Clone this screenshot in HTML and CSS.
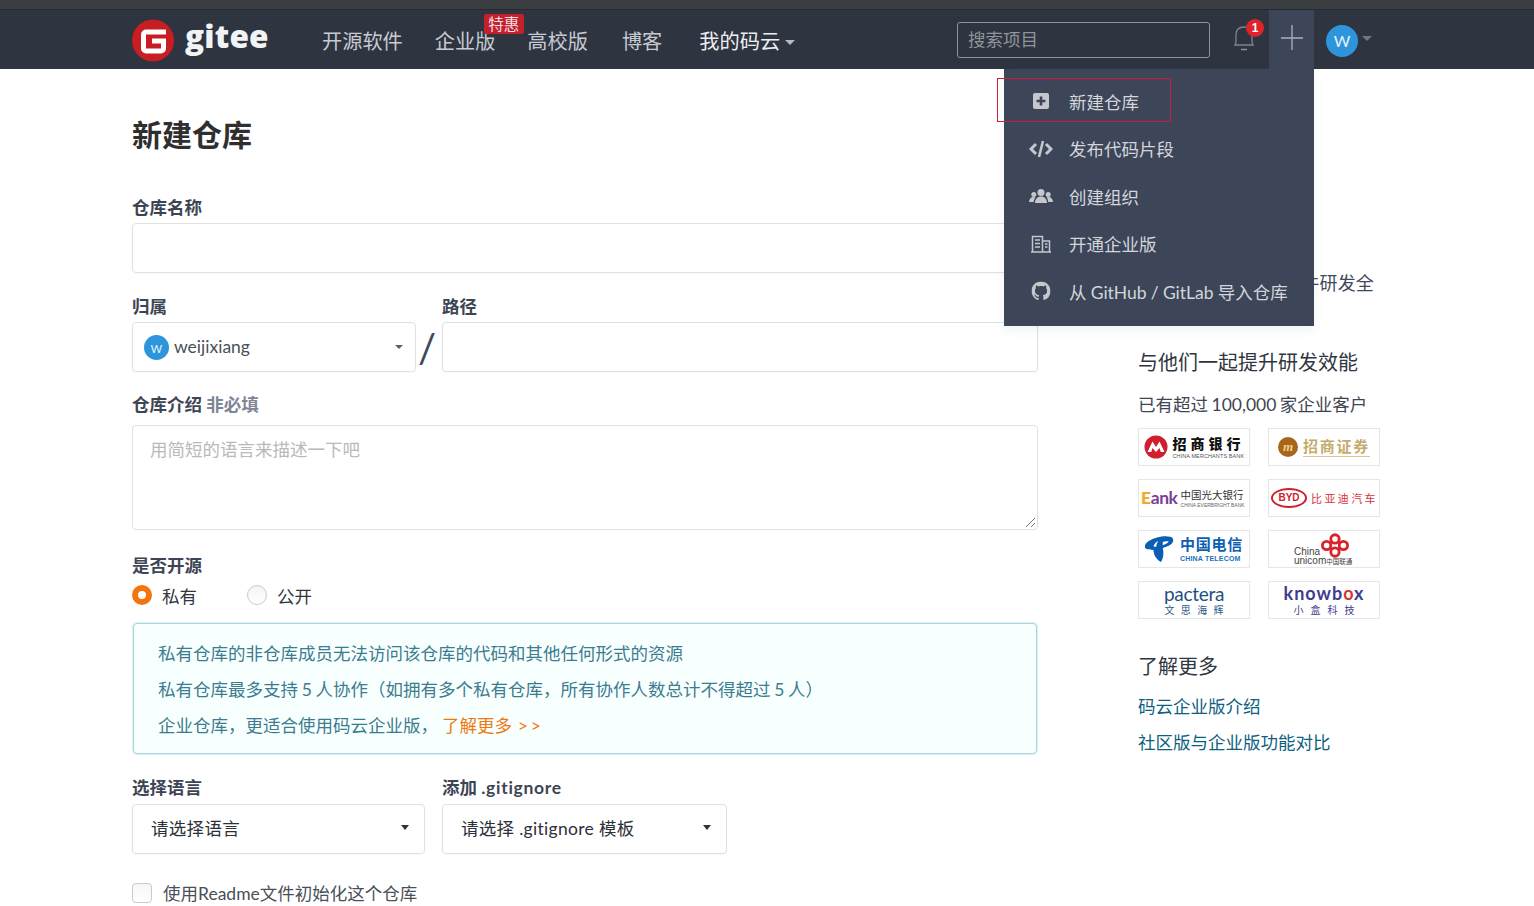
FILE: index.html
```html
<!DOCTYPE html>
<html lang="zh-CN">
<head>
<meta charset="utf-8">
<title>新建仓库</title>
<link rel="stylesheet" href="styles.css">
</head>
<body>
<div class="topstrip"></div>
<header class="header">
  <a class="logo">
    <svg class="logo-mark" viewBox="0 0 42 42" width="42" height="43"><circle cx="21" cy="21" r="21" fill="#c71d23"/><path d="M34 10H14a5 5 0 0 0-5 5v14a5 5 0 0 0 5 5h15a5 5 0 0 0 5-5V19H20v5h9v5H14V15h20z" fill="#fff"/></svg>
    <span class="logo-text">gitee</span>
  </a>
  <nav class="nav">
    <a class="nav-item nav-open">开源软件</a>
    <a class="nav-item nav-ent">企业版<span class="tag">特惠</span></a>
    <a class="nav-item nav-edu">高校版</a>
    <a class="nav-item nav-blog">博客</a>
    <a class="nav-item nav-mine">我的码云<i class="caret caret-light"></i></a>
  </nav>
  <div class="search">搜索项目</div>
  <div class="bell">
    <svg viewBox="0 0 24 30" width="24" height="30"><path d="M3 21c1-1 1-2 1-4v-6c0-5 3-8 8-8s8 3 8 8v6c0 2 0 3 1 4z" fill="none" stroke="#7d8490" stroke-width="1.300"/><path d="M9 25.500h6" stroke="#8a909c" stroke-width="1.500"/></svg>
    <span class="bell-badge">1</span>
  </div>
  <div class="plus">
    <svg viewBox="0 0 22 25" width="22" height="25"><path d="M11 0v25M0 13h22" stroke="#aab0bb" stroke-width="1.300"/></svg>
  </div>
  <div class="avatar">W</div>
  <i class="caret caret-dim"></i>
</header>

<main class="page">
  <section class="form">
    <h1 class="title">新建仓库</h1>
    <label class="label label-name">仓库名称</label>
    <div class="input"></div>

    <div class="row row-owner">
      <div class="col col-owner">
        <label class="label">归属</label>
        <div class="input select owner">
          <span class="mini-avatar">w</span><span class="owner-name">weijixiang</span><i class="caret caret-dark"></i>
        </div>
      </div>
      <span class="slash">/</span>
      <div class="col col-path">
        <label class="label">路径</label>
        <div class="input"></div>
      </div>
    </div>

    <label class="label label-desc">仓库介绍 <span class="optional">非必填</span></label>
    <div class="textarea">
      用简短的语言来描述一下吧
      <svg class="grip" viewBox="0 0 12 12" width="12" height="12"><path d="M11 2 2 11M11 7l-4 4" stroke="#777" stroke-width="1"/></svg>
    </div>

    <label class="label label-open">是否开源</label>
    <div class="radios">
      <span class="radio radio-on"></span><span class="radio-text">私有</span>
      <span class="radio radio-off"></span><span class="radio-text">公开</span>
    </div>

    <div class="notice">
      <p>私有仓库的非仓库成员无法访问该仓库的代码和其他任何形式的资源</p>
      <p>私有仓库最多支持 5 人协作（如拥有多个私有仓库，所有协作人数总计不得超过 5 人）</p>
      <p>企业仓库，更适合使用码云企业版，<a class="more">了解更多 <span class="arrows">&gt;&gt;</span></a></p>
    </div>

    <div class="row row-lang">
      <div class="col col-lang">
        <label class="label">选择语言</label>
        <div class="input select pick">请选择语言<i class="caret caret-black"></i></div>
      </div>
      <div class="col col-ignore">
        <label class="label">添加 <span class="label-latin">.gitignore</span></label>
        <div class="input select pick">请选择 .gitignore 模板<i class="caret caret-black"></i></div>
      </div>
    </div>

    <div class="check"><span class="checkbox"></span><span>使用Readme文件初始化这个仓库</span></div>
  </section>

  <aside class="side">
    <p class="side-intro">一站式企业级协作软件研发全</p>
    <h3 class="side-head side-head-a">与他们一起提升研发效能</h3>
    <p class="side-sub">已有超过 100,000 家企业客户</p>
    <div class="logos">
      <div class="brand">
        <svg viewBox="0 0 24 24" width="24" height="24"><circle cx="12" cy="12" r="11.500" fill="#d01f2e"/><path d="M3.500 17 8.500 6.500 12 12l3.500-5.500L20.500 17h-3.700l-1.300-4-3.500 4-3.500-4-1.300 4z" fill="#fff"/></svg>
        <span class="stack"><b class="cmb">招商银行</b><small class="cmb-en">CHINA MERCHANTS BANK</small></span>
      </div>
      <div class="brand">
        <svg viewBox="0 0 20 20" width="20" height="20"><circle cx="10" cy="10" r="10" fill="#a8661c"/><text x="10" y="14" text-anchor="middle" class="cms-m">m</text></svg>
        <span class="cms">招商证券</span>
      </div>
      <div class="brand brand-tight">
        <span class="ebank"><b class="ebank-e">E</b>ank</span>
        <span class="stack"><b class="ceb">中国光大银行</b><small class="ceb-en">CHINA EVERBRIGHT BANK</small></span>
      </div>
      <div class="brand brand-tight">
        <span class="byd">BYD</span><b class="byd-cn">比亚迪汽车</b>
      </div>
      <div class="brand">
        <svg viewBox="0 0 32 30" width="30" height="28"><path d="M2 8c6-5 18-8 25-6 4 1 4 5 1 8-3 2-6 3-9 4 1 5 1 10-2 15-5-3-8-8-8-13-3 0-7 0-9-2-1-2 0-4 2-6zm7 4c1 .5 2 .5 3 .5 0-2 1-4 2-6-2 1-4 3-5 5.500zm10-1c2.500-1 5-2 6.500-4-2-.5-4.500-.5-6.500.5z" fill="#0a5fb4"/></svg>
        <span class="stack"><b class="ct">中国电信</b><small class="ct-en">CHINA TELECOM</small></span>
      </div>
      <div class="brand brand-cu">
        <span class="stack cu-words"><span>China</span><span>unicom<small class="cu-cn">中国联通</small></span></span>
        <svg class="cu-knot" viewBox="0 0 30 26" width="28" height="25"><g fill="none" stroke="#d8232a" stroke-width="3"><circle cx="15" cy="6" r="4.500"/><circle cx="15" cy="20" r="4.500"/><circle cx="6" cy="13" r="4.500"/><circle cx="24" cy="13" r="4.500"/></g></svg>
      </div>
      <div class="brand brand-center">
        <span class="stack stack-center"><span class="pactera">pactera</span><span class="pactera-cn">文思海辉</span></span>
      </div>
      <div class="brand brand-center">
        <span class="stack stack-center"><span class="knowbox">knowb<em class="kb-o">o</em>x</span><span class="knowbox-cn">小盒科技</span></span>
      </div>
    </div>
    <h3 class="side-head side-head-b">了解更多</h3>
    <a class="side-link side-link-a">码云企业版介绍</a>
    <a class="side-link">社区版与企业版功能对比</a>
  </aside>
</main>

<div class="menu">
  <a class="menu-item">
    <svg viewBox="0 0 18 18" width="18" height="18"><path d="M3 1h12a2 2 0 0 1 2 2v12a2 2 0 0 1-2 2H3a2 2 0 0 1-2-2V3a2 2 0 0 1 2-2z" fill="#c4c7cc"/><path d="M9 4.500v9M4.500 9h9" stroke="#3d4559" stroke-width="2.600"/></svg>
    <span>新建仓库</span>
  </a>
  <a class="menu-item">
    <svg viewBox="0 0 24 18" width="24" height="18"><path d="M7 4 2 9l5 5M17 4l5 5-5 5" fill="none" stroke="#c4c7cc" stroke-width="3"/><path d="M14 1 10 17" stroke="#c4c7cc" stroke-width="2.600"/></svg>
    <span>发布代码片段</span>
  </a>
  <a class="menu-item">
    <svg viewBox="0 0 24 18" width="24" height="18"><g fill="#c4c7cc"><circle cx="12" cy="5.500" r="3.500"/><path d="M6 16c0-4 2.500-6.500 6-6.500s6 2.500 6 6.500z"/><circle cx="4.800" cy="7.500" r="2.500"/><path d="M0 15c0-3 2-5 4.500-5 1 0 1.500.3 2 .6C5.200 12 4.800 13.500 4.800 15z"/><circle cx="19.200" cy="7.500" r="2.500"/><path d="M24 15c0-3-2-5-4.500-5-1 0-1.500.3-2 .6 1.300 1.400 1.700 2.900 1.700 4.400z"/></g></svg>
    <span>创建组织</span>
  </a>
  <a class="menu-item">
    <svg viewBox="0 0 20 18" width="20" height="18"><path d="M1.500 17V1.500h10V17M11.500 6h7v11M0 17h20M4 5h5M4 8.500h5M4 12h5M14 9h2.500M14 12h2.500" fill="none" stroke="#c4c7cc" stroke-width="1.500"/></svg>
    <span>开通企业版</span>
  </a>
  <a class="menu-item">
    <svg viewBox="0 0 16 16" width="19" height="19"><path fill="#c4c7cc" d="M8 0C3.580 0 0 3.580 0 8c0 3.540 2.290 6.530 5.470 7.590.4.070.55-.17.55-.38 0-.19-.01-.82-.01-1.490-2.010.37-2.530-.49-2.690-.94-.09-.23-.48-.94-.82-1.130-.28-.15-.68-.52-.01-.53.630-.01 1.080.58 1.230.82.720 1.210 1.870.87 2.330.66.070-.52.280-.87.510-1.070-1.780-.2-3.640-.89-3.640-3.950 0-.87.310-1.590.820-2.150-.08-.2-.36-1.020.08-2.120 0 0 .67-.21 2.200.82.640-.18 1.320-.27 2-.27s1.360.09 2 .27c1.530-1.040 2.200-.82 2.200-.82.440 1.100.16 1.920.08 2.120.51.560.82 1.270.82 2.150 0 3.070-1.870 3.750-3.650 3.950.29.250.54.730.54 1.480 0 1.070-.01 1.930-.01 2.200 0 .21.150.46.550.38A8.013 8.013 0 0 0 16 8c0-4.420-3.580-8-8-8z"/></svg>
    <span>从 GitHub / GitLab 导入仓库</span>
  </a>
</div>
<div class="menu-mark"></div>
</body>
</html>
```
FILE: styles.css
```css
* { box-sizing: border-box; }
html, body { margin: 0; padding: 0; }
body {
  width: 1534px;
  height: 906px;
  overflow: hidden;
  position: relative;
  background: #fff;
  color: #40485b;
  font-family: Lato, "Noto Sans CJK SC", "Liberation Sans", sans-serif;
  font-size: 17.5px;
  font-weight: 400;
}
p, h1, h3 { margin: 0; }
a { text-decoration: none; color: inherit; }
i, em { font-style: normal; }

.topstrip { height: 10px; background: #3a3d40; border-bottom: 1px solid #262a34; }

.header {
  height: 59px;
  display: flex;
  align-items: center;
  background: #2f3441;
  padding-left: 132px;
  color: #d6d9de;
}
.logo { display: flex; align-items: center; width: 190px; flex: none; }
.logo-mark { flex: none; margin-top: 1px; }
.logo-text {
  margin: -7px 0 0 11px;
  font-family: "Open Sans", sans-serif;
  font-weight: 800;
  font-size: 31.500px;
  line-height: 40px;
  color: #f2f3f5;
  letter-spacing: .2px;
}
.nav { display: flex; align-items: center; width: 635px; flex: none; padding-top: 3px; }
.nav-item { font-size: 20.200px; line-height: 28px; color: #c7cbd2; position: relative; white-space: nowrap; }
.nav-ent { margin-left: 32px; }
.nav-edu { margin-left: 32px; }
.nav-blog { margin-left: 34px; }
.nav-mine { margin-left: 37px; color: #eceef1; display: flex; align-items: center; }
.tag {
  position: absolute;
  left: 49px;
  top: -13px;
  width: 40px;
  height: 20px;
  background: #c3202c;
  color: #f4dfe0;
  font-size: 15.500px;
  line-height: 20px;
  text-align: center;
  border-radius: 2px;
}
.caret { display: block; width: 0; height: 0; border-style: solid; border-color: transparent; border-width: 5px 5px 0; }
.caret-light { border-top-color: #b6bac2; margin: 3px 0 0 5px; }
.caret-dim { border-top-color: #6f7585; margin: -3px 0 0 4px; }
.caret-dark { border-top-color: #5c5f66; border-width: 4.500px 4.500px 0; margin-left: auto; }
.caret-black { border-top-color: #333; border-width: 5px 4.500px 0; margin: -3px 0 0 auto; }

.search {
  width: 253px;
  height: 36px;
  flex: none;
  border: 1px solid #8d929c;
  border-radius: 3px;
  padding-left: 10px;
  font-size: 17.500px;
  line-height: 34px;
  color: #8f949c;
}
.bell { width: 24px; height: 30px; margin-left: 22px; flex: none; position: relative; margin-top: -2px; }
.bell-badge {
  position: absolute;
  left: 14px;
  top: -5px;
  width: 18px;
  height: 18px;
  border-radius: 50%;
  background: #e0232b;
  color: #fff;
  font: 700 12px/18px "Liberation Sans", sans-serif;
  text-align: center;
}
.plus {
  width: 45px;
  height: 59px;
  flex: none;
  margin-left: 13px;
  padding: 0 0 5px 0;
  background: #3d4559;
  display: flex;
  align-items: center;
  justify-content: center;
}
.avatar {
  width: 32px;
  height: 32px;
  flex: none;
  margin: 2px 0 0 12px;
  border-radius: 50%;
  background: #2e95dc;
  color: #e9f4fc;
  font: 400 16px/32px Lato, sans-serif;
  text-align: center;
}

.page { display: flex; padding-left: 132px; align-items: flex-start; }
.form { width: 906px; flex: none; }
.title { margin-top: 46px; font-size: 30px; line-height: 38px; font-weight: 700; color: #2f2f2f; }
.label { display: block; font-size: 17.500px; line-height: 22px; font-weight: 700; color: #3d4555; }
.label-name { margin-top: 44px; margin-bottom: 4px; }
.row-owner > .col > .label { margin-bottom: 4px; }
.row-lang > .col > .label { margin-bottom: 5px; }
.label-latin { letter-spacing: .7px; }
.input {
  height: 50px;
  border: 1px solid #dfe1e5;
  border-radius: 4px;
  background: #fff;
  box-shadow: 0 1px 2px rgba(0,0,0,.03);
}
.row { display: flex; align-items: flex-start; }
.row-owner { margin-top: 23px; }
.col-owner { width: 284px; flex: none; }
.slash { width: 26px; flex: none; padding: 28px 4px 0 0; text-align: center; font-size: 40px; line-height: 48px; color: #40485b; }
.col-path { flex: 1; }
.select { display: flex; align-items: center; padding-right: 12px; }
.owner { padding-left: 11px; }
.mini-avatar {
  width: 25px;
  height: 25px;
  flex: none;
  border-radius: 50%;
  background: #2e95dc;
  color: #dbeefa;
  font-size: 15px;
  line-height: 25px;
  text-align: center;
  margin-top: 1px;
}
.owner-name { margin-left: 5px; color: #4a4f59; font-size: 17.500px; font-weight: 400; margin-top: -2px; }
.label-desc { margin-top: 22px; margin-bottom: 9px; }
.optional { color: #7d8596; }
.textarea {
  height: 105px;
  border: 1px solid #dfe1e5;
  border-radius: 4px;
  padding: 12px 17px;
  line-height: 24px;
  color: #b9b9b9;
  position: relative;
}
.grip { position: absolute; right: 1px; bottom: 1px; }
.label-open { margin-top: 25px; }
.radios { display: flex; align-items: center; margin-top: 6px; height: 24px; }
.radio { width: 20px; height: 20px; border-radius: 50%; flex: none; }
.radio-on { background: #fff; border: 6px solid #f3740c; }
.radio-off { margin-left: 50px; background: linear-gradient(#f4f4f4, #fff); border: 1px solid #c8cacd; }
.radio-text { margin-left: 10px; color: #2f3640; font-size: 17.500px; }
.notice {
  margin: 16px 1px 0;
  height: 131px;
  padding: 12px 24px;
  border: 1px solid #a9d5de;
  border-radius: 4px;
  background: #f8ffff;
  box-shadow: 0 0 0 1px rgba(169,213,222,.35);
  color: #3b7c8f;
  line-height: 36px;
  word-spacing: -.8px;
}
.more { color: #f0790f; margin-left: 4px; }
.arrows { letter-spacing: 3px; margin-left: 2px; }
.row-lang { margin-top: 23px; }
.col-lang { width: 293px; flex: none; }
.col-ignore { width: 285px; flex: none; margin-left: 17px; }
.pick { padding: 0 15px 0 18px; color: #2c3038; font-size: 17.500px; line-height: 50px; letter-spacing: .3px; }
.check { display: flex; align-items: center; margin-top: 26px; color: #4a4f59; font-size: 17.500px; }
.checkbox {
  width: 20px;
  height: 20px;
  flex: none;
  margin-right: 11px;
  border: 1px solid #c8cacd;
  border-radius: 4px;
  background: linear-gradient(#f6f6f6, #fff);
}

.side { width: 242px; flex: none; margin-left: 100px; }
.side-intro { margin-top: 201px; font-size: 18px; line-height: 26px; white-space: nowrap; color: #40485b; letter-spacing: .15px; }
.side-head { font-size: 20px; line-height: 28px; color: #2f3640; font-weight: 400; }
.side-head-a { margin-top: 52px; }
.side-sub { margin-top: 15px; line-height: 28px; color: #3f4653; white-space: nowrap; word-spacing: -1px; }
.logos { display: grid; grid-template-columns: 112px 112px; column-gap: 18px; row-gap: 13px; margin-top: 9px; }
.brand {
  height: 38px;
  border: 1px solid #e6e6e6;
  display: flex;
  align-items: center;
  justify-content: center;
  gap: 5px;
  overflow: hidden;
  white-space: nowrap;
}
.brand-center { gap: 0; }
.brand-tight { gap: 3px; justify-content: flex-start; padding-left: 2px; }
.stack { display: flex; flex-direction: column; line-height: 1; }
.stack-center { align-items: center; }
.cmb { font-size: 14px; letter-spacing: 4px; color: #111; line-height: 18px; font-weight: 900; }
.cmb-en { font: 400 5.500px/6px "Liberation Sans", sans-serif; color: #555; letter-spacing: .1px; }
.cms-m { font: italic 700 13px "Liberation Serif", serif; fill: #f4d08a; }
.cms { font-size: 15px; font-weight: 700; letter-spacing: 1.800px; color: #c5ab6c; border-bottom: 1px solid #d8c697; line-height: 19px; }
.ebank { font: 700 17.500px/20px Lato, sans-serif; color: #7a3f9a; letter-spacing: -.4px; }
.ebank-e { color: #efa92b; }
.ceb { font-size: 10.500px; line-height: 13px; color: #333; font-weight: 400; }
.ceb-en { font: 400 5px/6px "Liberation Sans", sans-serif; color: #666; }
.byd {
  width: 36px;
  height: 20px;
  margin-right: 1px;
  border: 2px solid #cf2030;
  border-radius: 50%;
  color: #cf2030;
  font: 700 10px/16px "Liberation Sans", sans-serif;
  text-align: center;
  flex: none;
}
.byd-cn { font-size: 11px; color: #d9333d; letter-spacing: 2.400px; font-weight: 400; }
.ct { font-size: 15px; letter-spacing: .8px; color: #0a5fb4; line-height: 19px; }
.ct-en { font: 700 7px/9px "Liberation Sans", sans-serif; color: #1b6fbd; letter-spacing: .2px; }
.brand-cu { position: relative; justify-content: flex-start; padding: 14px 0 0 25px; }
.cu-words { color: #444; font: 400 10px/9px "Liberation Sans", sans-serif; }
.cu-cn { font: 400 6.500px/8px "Noto Sans CJK SC", sans-serif; }
.cu-knot { position: absolute; left: 52px; top: 2px; }
.pactera { font: 400 19px/19px Lato, sans-serif; color: #1f4f80; letter-spacing: -.3px; }
.pactera-cn { font-size: 10px; line-height: 14px; letter-spacing: 6.300px; padding-left: 6.300px; color: #2a5a8a; }
.knowbox { font: 700 18px/19px Lato, sans-serif; color: #3d3c8e; letter-spacing: 1px; }
.kb-o { color: #d8352c; }
.knowbox-cn { font-size: 10px; line-height: 14px; letter-spacing: 7px; padding-left: 7px; color: #3d3c8e; }
.side-head-b { margin-top: 33px; }
.side-link { display: block; margin-top: 8px; line-height: 28px; color: #0d5f80; white-space: nowrap; }
.side-link-a { margin-top: 13px; }

.menu {
  position: absolute;
  left: 1004px;
  top: 69px;
  width: 310px;
  height: 257px;
  padding-top: 8.500px;
  background: #3d4559;
  box-shadow: 0 4px 10px rgba(60,90,130,.08);
  color: #d3d6db;
  z-index: 2;
}
.menu-item { display: flex; align-items: center; height: 47.500px; position: relative; padding-left: 65px; white-space: nowrap; font-size: 17.500px; word-spacing: -.3px; }
.menu-item svg { position: absolute; left: 37px; top: 50%; transform: translate(-50%, -50%); }
.menu-mark {
  position: absolute;
  left: 997px;
  top: 78px;
  width: 174px;
  height: 44px;
  border: 1px solid #c8203a;
  z-index: 3;
}
```
